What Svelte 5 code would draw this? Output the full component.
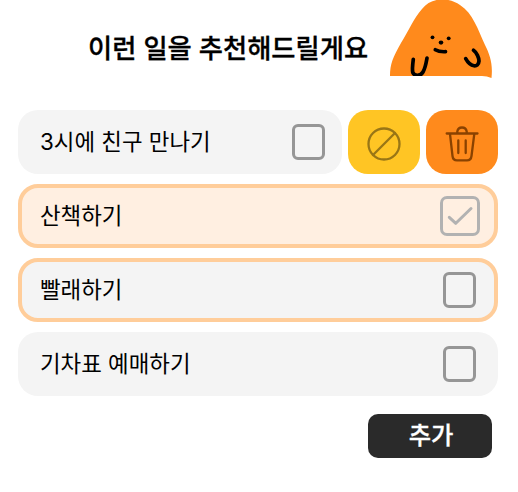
<script>
  const items = [
    { text: '3시에 친구 만나기', actions: true },
    { text: '산책하기', outlined: true, checked: true },
    { text: '빨래하기', outlined: true },
    { text: '기차표 예매하기' }
  ];
</script>

<main>
  <header>
    <h1>이런 일을 추천해드릴게요</h1>
    <svg class="mascot" width="104" height="80" viewBox="0 0 104 80" aria-hidden="true">
      <path d="M2 76C2 64 5 57 13 43C21 30 26 18 34 9C43-3 61-3 72 5C85 13 90 30 97 45C102 55 105 64 103.500 78Q99 76.200 94 76Z" fill="#ff8a1c" />
      <circle cx="44.500" cy="37.300" r="1.900" />
      <circle cx="60.700" cy="38.300" r="1.900" />
      <ellipse cx="53" cy="42.600" rx="2.300" ry="2.100" />
      <path class="line" d="M47.300 49.700Q51 52 57.500 51.700" />
      <path class="line" d="M25.300 59.300C24.700 64 24 69 24.800 72.500C26.500 76.500 32.500 76.500 35 72C37.500 67.500 38.300 62 39 58" />
      <path class="line" d="M85.500 50.300C88.800 52.500 91 58 91 61C90.500 68 82.500 67.500 77.700 58.700" />
      <rect x="20" y="76" width="24" height="4" fill="#fff" />
    </svg>
  </header>

  <ul>
    {#each items as item}
      <li>
        <div class="item" class:outlined={item.outlined} class:checked={item.checked} class:compact={item.actions}>
          <span>{item.text}</span>
          <i class="box">
            {#if item.checked}
              <svg width="40" height="40" viewBox="0 0 40 40"><path d="M9.300 21.300L15.800 27.300L31 12.500" /></svg>
            {/if}
          </i>
        </div>
        {#if item.actions}
          <button class="action skip" aria-label="제외">
            <svg width="72" height="64" viewBox="0 0 72 64"><circle cx="36" cy="34" r="15.500" /><path d="M25 45L47 23" /></svg>
          </button>
          <button class="action remove" aria-label="삭제">
            <svg width="72" height="64" viewBox="0 0 72 64"><path d="M20.700 23.500H51.500M31.300 23V21.500Q32 17.500 36 17.500T40.700 21.500V23M24 24L26.500 46Q27 50.400 31 50.400H41Q45 50.400 45.500 46L48.300 24M32.300 30.500V43M39.700 30.500V43" /></svg>
          </button>
        {/if}
      </li>
    {/each}
  </ul>

  <button class="add">추가</button>
</main>

<style>
  :global(body) {
    background: #fff;
  }
  main {
    box-sizing: border-box;
    width: 518px;
    height: 492px;
    padding: 0 20px 0 18px;
    display: flex;
    flex-direction: column;
    font-family: Inter, 'Noto Sans CJK KR', sans-serif;
    color: #000;
    overflow: hidden;
  }
  header {
    height: 110px;
    flex: none;
    display: flex;
    align-items: flex-start;
    padding-left: 70px;
  }
  h1 {
    width: 300px;
    margin: 30px 0 0;
    font-size: 26.3px;
    line-height: 38px;
    font-weight: 500;
    white-space: nowrap;
    -webkit-text-stroke: 0.3px #000;
  }
  svg {
    display: block;
    flex: none;
  }
  .line {
    fill: none;
    stroke: #000;
    stroke-width: 3.7;
    stroke-linecap: round;
    stroke-linejoin: round;
  }
  ul {
    list-style: none;
    margin: 0;
    padding: 0;
    display: flex;
    flex-direction: column;
    gap: 10px;
  }
  li {
    display: flex;
    gap: 6px;
    width: 480px;
  }
  .item {
    box-sizing: border-box;
    flex: 1;
    height: 64px;
    padding: 0 22px;
    border-radius: 20px;
    background: #f4f4f4;
    display: flex;
    align-items: center;
    justify-content: space-between;
    font-size: 22.4px;
    line-height: 32px;
    white-space: nowrap;
  }
  .compact {
    padding-right: 17px;
  }
  .outlined {
    border: 4px solid #ffcd9a;
    padding: 0 18px;
  }
  .checked {
    background: #ffefe1;
    padding-right: 14px;
  }
  .box {
    box-sizing: border-box;
    width: 33px;
    height: 36px;
    border: 3px solid #969696;
    border-radius: 6px;
  }
  .checked .box {
    width: 40px;
    height: 40px;
    border-color: #b2b2b2;
    border-radius: 7px;
  }
  .box svg {
    margin: -3px;
    fill: none;
    stroke: #b2b2b2;
    stroke-width: 3;
    stroke-linecap: round;
    stroke-linejoin: round;
  }
  button {
    border: 0;
    padding: 0;
    font: inherit;
  }
  .action {
    width: 72px;
    height: 64px;
    border-radius: 20px;
    overflow: hidden;
  }
  .action svg {
    fill: none;
    stroke-width: 2.3;
    stroke-linecap: round;
    stroke-linejoin: round;
  }
  .skip {
    background: #ffc524;
    stroke: #997616;
  }
  .remove {
    background: #ff8a1c;
    stroke: #8a4200;
  }
  .add {
    align-self: flex-end;
    width: 124px;
    height: 44px;
    margin: 18px 6px 0 0;
    padding: 0 0 2px 2px;
    border-radius: 10px;
    background: #2a2a2a;
    color: #fff;
    font-size: 24.3px;
    line-height: 36px;
    font-weight: 500;
    -webkit-text-stroke: 0.3px #fff;
  }
</style>
